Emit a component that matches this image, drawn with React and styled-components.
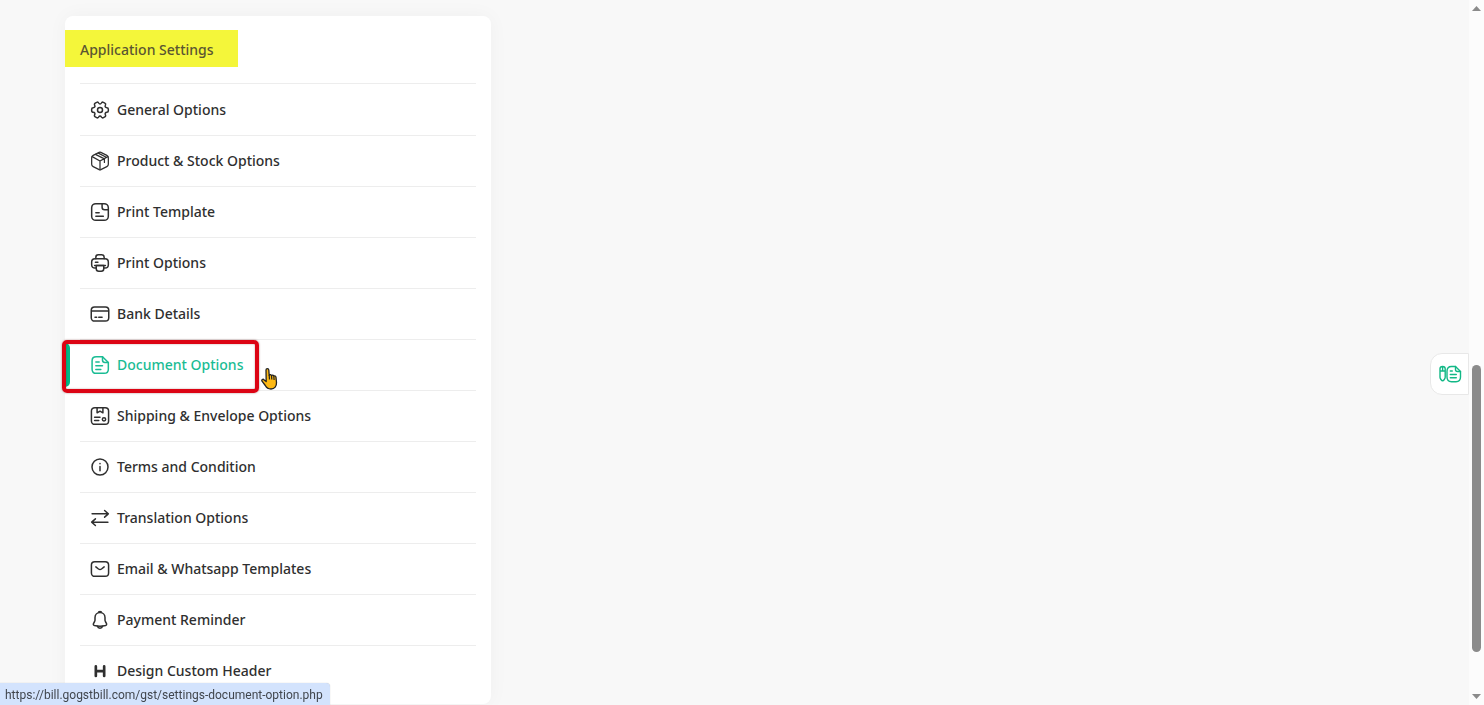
import React from "react";
import styled, { createGlobalStyle } from "styled-components";

const GlobalStyle = createGlobalStyle`
  * {
    box-sizing: border-box;
  }

  body {
    margin: 0;
    overflow: hidden;
    background: #f8f8f8;
    color: #2f2f2f;
    font-family: "Noto Sans", "Open Sans", sans-serif;
    font-size: 14px;
  }
`;

const Window = styled.div`
  display: flex;
  height: 100vh;
`;

const Page = styled.main`
  flex: 1;
  display: grid;
  grid-template-columns: repeat(3, 1fr);
  align-items: start;
  padding: 16px 50px 0;
`;

const Column = styled.div`
  padding: 0 15px;
`;

const Card = styled.section`
  padding: 14px 15px 7px;
  border-radius: 8px;
  background: white;
  box-shadow: 0 0 20px rgba(8, 21, 15, 0.04);
`;

const CardHeader = styled.header`
  display: flex;
  margin-left: -15px;
  padding-bottom: 16px;
`;

const Title = styled.h2`
  margin: 0;
  padding: 2px 24px 0 15px;
  background: #f4f63a;
  color: #5a5532;
  font-size: 14px;
  font-weight: 500;
  line-height: 35px;
`;

const Menu = styled.ul`
  margin: 0;
  padding: 1px 0 0;
  border-top: 1px solid #ededed;
  list-style: none;
`;

const MenuItem = styled.li`
  position: relative;
  border-bottom: 1px solid #ededed;

  &:last-child {
    border-bottom-color: transparent;
  }
`;

const MenuLink = styled.a`
  display: flex;
  align-items: center;
  gap: 7px;
  height: 50px;
  padding-left: 10px;
  color: ${props => (props.$active ? "#1abc94" : "#2f2f2f")};
  font-weight: 500;
  text-decoration: none;
`;

const Label = styled.span`
  padding-bottom: 2px;
`;

const ActiveBar = styled.span`
  position: absolute;
  top: 3px;
  bottom: 3px;
  left: -15px;
  width: 5px;
  border-radius: 0 5px 5px 0;
  background: #00b786;
`;

const Highlight = styled.span`
  position: absolute;
  top: 0;
  left: -18px;
  width: 197px;
  height: 53px;
  z-index: 1;
  border: 4px solid #dc0414;
  border-radius: 5px;
  box-shadow: 0 0 2px rgba(90, 0, 0, 0.5), inset 0 0 2px rgba(90, 0, 0, 0.4);
  pointer-events: none;
`;

const Pointer = styled.svg`
  position: absolute;
  top: 27px;
  left: 180px;
  z-index: 2;
`;

const SideButton = styled.button`
  position: fixed;
  top: 353px;
  right: 15px;
  display: flex;
  align-items: center;
  justify-content: center;
  width: 39px;
  height: 42px;
  padding: 0;
  border: 1px solid #e8e8e8;
  border-radius: 12px 0 0 12px;
  background: white;
  color: #12b886;
`;

const StatusBar = styled.div`
  position: fixed;
  bottom: 0;
  left: 0;
  z-index: 3;
  height: 22px;
  padding: 0 7px 0 5px;
  border-radius: 0 4px 0 0;
  background: #d3e3fd;
  box-shadow: 0 0 1px rgba(0, 0, 0, 0.3);
  color: #41464d;
  font-family: Roboto, "Open Sans", sans-serif;
  font-size: 12px;
  line-height: 24px;
`;

const Scrollbar = styled.div`
  display: flex;
  flex-direction: column;
  align-items: center;
  justify-content: space-between;
  width: 15px;
  padding: 6px 0;
  background: #fcfcfc;
`;

const ScrollTrack = styled.div`
  flex: 1;
  display: grid;
  grid-template-rows: 354fr 287fr 42fr;
  width: 9px;
`;

const ScrollThumb = styled.div`
  grid-row: 2;
  border-radius: 5px;
  background: #8b8b8b;
`;

const Icon = ({ children }) => (
  <svg
    width="20"
    height="20"
    viewBox="0 0 24 24"
    fill="none"
    stroke="currentColor"
    strokeWidth="1.8"
    strokeLinecap="round"
    strokeLinejoin="round"
    aria-hidden="true">
    {children}
  </svg>
);

const items = [
  {
    label: "General Options",
    icon: (
      <>
        <circle cx="12" cy="12" r="3" />
        <path d="M2 12.9v-1.8c0-1 .9-1.9 1.9-1.9 1.8 0 2.6-1.3 1.7-2.9-.6-.9-.2-2.1.7-2.6L8 2.8c.8-.5 1.8-.2 2.3.6l.1.2c.9 1.6 2.4 1.6 3.3 0l.1-.2c.5-.8 1.5-1.1 2.3-.6l1.7.9c.9.5 1.2 1.7.7 2.6-.9 1.6-.1 2.9 1.7 2.9 1 0 1.8.9 1.8 1.9v1.8c0 1-.8 1.9-1.8 1.9-1.8 0-2.6 1.3-1.7 2.9.5.9.2 2.1-.7 2.6l-1.7.9c-.8.5-1.8.2-2.3-.6l-.1-.2c-.9-1.6-2.4-1.6-3.3 0l-.1.2c-.5.8-1.5 1.1-2.3.6l-1.7-.9c-.9-.5-1.3-1.7-.7-2.6.9-1.6.1-2.9-1.7-2.9-1 0-1.9-.9-1.9-1.9Z" />
      </>
    )
  },
  {
    label: "Product & Stock Options",
    icon: (
      <g strokeWidth="1.5">
        <path d="M11 1.700 3.800 5.300c-1.200.6-1.800 1.500-1.800 2.800v7.800c0 1.300.6 2.200 1.800 2.800l7.200 3.600c.7.300 1.300.3 2 0l7.200-3.600c1.200-.6 1.800-1.500 1.800-2.800V8.100c0-1.300-.6-2.200-1.800-2.800L13 1.700c-.7-.3-1.300-.3-2 0Z" />
        <path d="M2.600 6.700 12 12l9.400-5.300M12 12v10.300M6.500 4l10.800 5.500v4.200M10 2.500l9.500 5" />
      </g>
    )
  },
  {
    label: "Print Template",
    icon: (
      <>
        <rect x="2" y="2" width="20" height="20" rx="5" />
        <path d="M14.500 2.300v4c0 2 1 3 3 3h4.200M7 13h4M7 17h9" />
      </>
    )
  },
  {
    label: "Print Options",
    icon: (
      <>
        <path d="M7 7V5c0-2 .8-3 3-3h4c2.200 0 3 1 3 3v2M16.500 15v4c0 2-1 3-3 3h-3c-2 0-3-1-3-3v-4h9Z" />
        <path d="M7.500 18H6c-2.500 0-4-1.300-4-4v-3c0-2.700 1.500-4 4-4h12c2.500 0 4 1.300 4 4v3c0 2.700-1.500 4-4 4h-1.500M5.500 15h13M6.500 11h3" />
      </>
    )
  },
  {
    label: "Bank Details",
    icon: (
      <>
        <rect x="1.500" y="3.500" width="21" height="17" rx="4" />
        <path d="M2 8.500h20M6 16h2M10.500 16h4" />
      </>
    )
  },
  {
    label: "Document Options",
    active: true,
    icon: (
      <>
        <path d="M22 9v8c0 3.500-1.700 5-5 5H7.500c-3.300 0-5-1.500-5-5V7c0-3.500 1.700-5 5-5H15l7 7Z" />
        <path d="M15 2v4c0 2 1 3 3 3h4M7 8.500h4M7 13h8M7 17.500h6" />
      </>
    )
  },
  {
    label: "Shipping & Envelope Options",
    icon: (
      <>
        <rect x="1.700" y="2" width="20.600" height="20" rx="4" />
        <path d="M8.500 2.300v5.900L12 6.200l3.500 2V2.300M5.500 13.500h6.500M5.500 17.500h5" />
        <circle cx="16.800" cy="16" r="2" />
      </>
    )
  },
  {
    label: "Terms and Condition",
    icon: (
      <>
        <circle cx="12" cy="12" r="9.600" />
        <path d="M12 11.500v5M12 7.800v.2" />
      </>
    )
  },
  {
    label: "Translation Options",
    icon: <path d="M2.500 7h19.500M17.500 3l4.500 4-4.500 4M21.500 17h-19.500M6.500 13 2 17l4.500 4" />
  },
  {
    label: "Email & Whatsapp Templates",
    icon: (
      <>
        <rect x="1.700" y="3.200" width="20.600" height="17.600" rx="4" />
        <path d="m7 9.500 3.200 2.500c1.100.8 2.500.8 3.600 0L17 9.500" />
      </>
    )
  },
  {
    label: "Payment Reminder",
    icon: (
      <>
        <path d="M12 3c-3.500 0-6 2.600-6 6v3c0 .7-.3 1.500-.6 2.100L4.300 16c-.7 1.200-.2 2.300 1.100 2.700 4.300 1.200 8.900 1.200 13.200 0 1.200-.4 1.700-1.600 1.100-2.700l-1.100-1.900c-.3-.6-.6-1.400-.6-2.100V9c0-3.400-2.600-6-6-6Z" />
        <path d="M10.500 2.300c.8-.6 2.200-.6 3 0M9 19.500c.6 3 5.400 3 6 0" />
      </>
    )
  },
  {
    label: "Design Custom Header",
    icon: <path strokeWidth="3.200" d="M7 6.500v11.500M17 6.500v11.500M7 12.200h10" />
  }
];

const HandPointer = () => (
  <Pointer width="20" height="24" viewBox="0 0 20 24" aria-hidden="true">
    <path
      d="M6 3c0-1.800 2.700-1.800 2.800 0l.4 5.200c.7-.9 2-.7 2.300.3.800-.7 2-.4 2.300.6.900-.6 2.100 0 2.200 1.100l.5 5.300c.2 3.600-1.900 6.500-5.500 6.500-3 0-4.600-1.300-5.700-3.500L2 14.200c-.9-1.600 1-2.600 2.200-1.300l2 1.700Z"
      fill="#fdb813"
      stroke="#222"
      strokeWidth="1.3"
      strokeLinejoin="round"
    />
    <path d="m9.200 8 .3 4.500M11.500 8.500l.3 4M13.800 9.200l.3 3.800" stroke="#222" strokeWidth="1.2" />
  </Pointer>
);

const App = () => (
  <>
    <GlobalStyle />
    <Window>
      <Page>
        <Column>
          <Card>
            <CardHeader>
              <Title>Application Settings</Title>
            </CardHeader>
            <Menu>
              {items.map(({ label, icon, active }) => (
                <MenuItem key={label}>
                  {active && <ActiveBar />}
                  <MenuLink href="#" $active={active}>
                    <Icon>{icon}</Icon>
                    <Label>{label}</Label>
                  </MenuLink>
                  {active && <Highlight />}
                  {active && <HandPointer />}
                </MenuItem>
              ))}
            </Menu>
          </Card>
        </Column>
      </Page>
      <Scrollbar>
        <svg width="9" height="5" viewBox="0 0 9 5">
          <path d="M4.500 0 9 5H0Z" fill="#8b8b8b" />
        </svg>
        <ScrollTrack>
          <ScrollThumb />
        </ScrollTrack>
        <svg width="9" height="5" viewBox="0 0 9 5">
          <path d="M4.500 5 9 0H0Z" fill="#8b8b8b" />
        </svg>
      </Scrollbar>
    </Window>
    <SideButton aria-label="Open notes">
      <svg
        width="24"
        height="20"
        viewBox="0 0 24 20"
        fill="none"
        stroke="currentColor"
        strokeWidth="1.400"
        strokeLinecap="round"
        strokeLinejoin="round">
        <path d="M2 4.800C2 1.700 7.200 1.700 7.200 4.800v8.400c0 1.300-1.600 3.600-2.600 3.600S2 14.500 2 13.200V4.800ZM2 7h5.200M4.600 2.800V7" />
        <path d="M22.500 7.500v5.500c0 3.200-1.400 4.700-4.500 4.700h-4.500C10.400 17.700 9 16.200 9 13V7.200c0-3.200 1.400-4.700 4.500-4.700h4L22.500 7.500Z" />
        <path d="M17.500 2.500v3c0 1.400.6 2 2 2h3M12.300 7h2M12.300 10.500h6M12.300 13.800h6" />
      </svg>
    </SideButton>
    <StatusBar>https://bill.gogstbill.com/gst/settings-document-option.php</StatusBar>
  </>
);

export default App;
